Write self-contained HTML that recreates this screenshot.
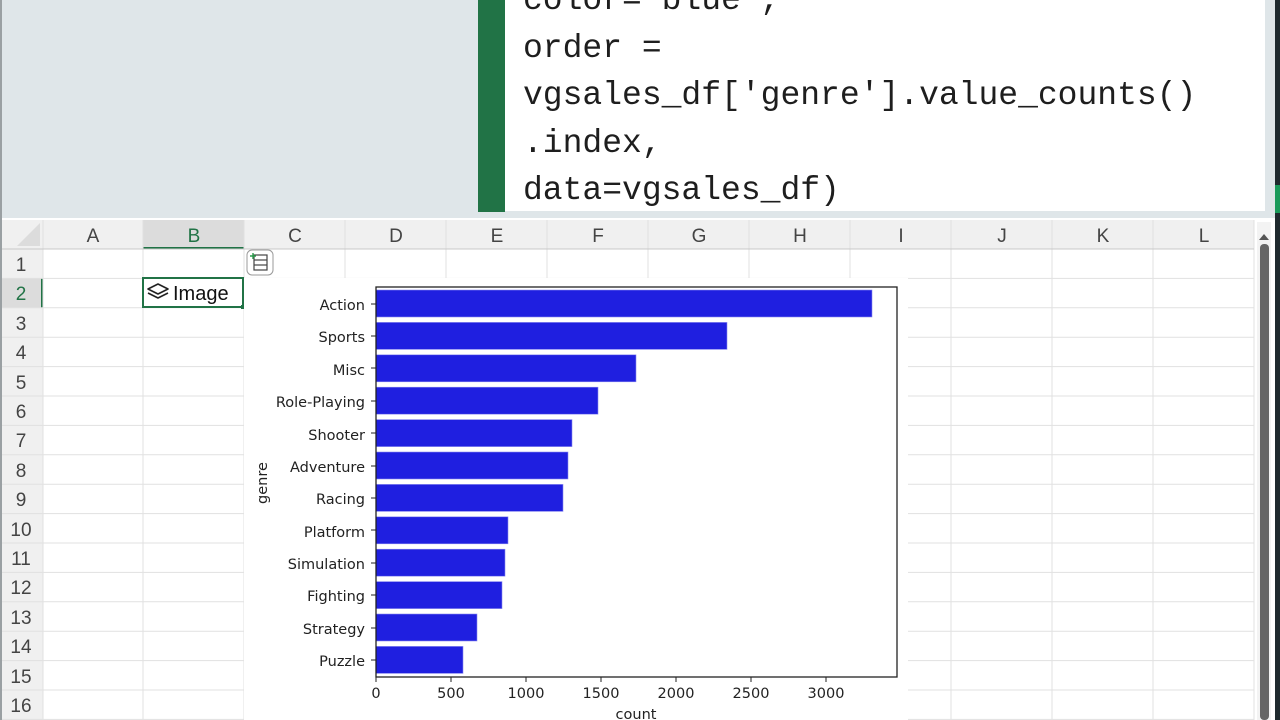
<!DOCTYPE html>
<html><head><meta charset="utf-8"><style>
html,body{margin:0;padding:0;width:1280px;height:720px;overflow:hidden;background:#fff;font-family:"Liberation Sans",sans-serif}
.abs{position:absolute}
.code{font-family:"Liberation Mono",monospace;font-size:33px;color:#1e1e1e;line-height:47.5px;white-space:pre}
</style></head><body>
<div class="abs" style="left:0;top:0;width:1280px;height:220px;background:#dfe6e9"></div>
<div class="abs" style="left:0;top:0;width:2px;height:720px;background:#9aa0a3"></div>
<div class="abs" style="left:478px;top:0;width:27px;height:212px;background:#217346"></div>
<div class="abs" style="left:505px;top:0;width:760px;height:211px;background:#fff"></div>
<div class="abs" style="left:1275px;top:0;width:5px;height:720px;background:#1f2a2e"></div>
<div class="abs" style="left:1275px;top:185px;width:5px;height:28px;background:#1a9a5a"></div>
<div class="abs code" style="left:523px;top:-23px">color='blue',
order =
vgsales_df['genre'].value_counts()
.index,
data=vgsales_df)</div>
<svg class="abs" style="left:0;top:218px" width="1275" height="502" xmlns="http://www.w3.org/2000/svg" font-family="Liberation Sans, sans-serif">
<rect x="2" y="0" width="1273" height="502" fill="#fff"/>
<rect x="2" y="2" width="1252" height="29" fill="#f0f0f0"/>
<rect x="143" y="2" width="101" height="29" fill="#dcdcdc"/>
<line x1="143" y1="30" x2="244" y2="30" stroke="#217346" stroke-width="2"/>
<rect x="2" y="31" width="41" height="471" fill="#f0f0f0"/>
<rect x="2" y="60" width="41" height="30" fill="#dcdcdc"/>
<line x1="42" y1="60" x2="42" y2="90" stroke="#217346" stroke-width="2"/>
<polygon points="40,5 40,28 17,28" fill="#dcdcdc"/>
<g stroke="#e1e1e1" stroke-width="1">
<line x1="43" y1="2" x2="43" y2="502"/><line x1="143" y1="2" x2="143" y2="502"/><line x1="244" y1="2" x2="244" y2="502"/>
<line x1="345" y1="2" x2="345" y2="60"/><line x1="446" y1="2" x2="446" y2="60"/><line x1="547" y1="2" x2="547" y2="60"/><line x1="648" y1="2" x2="648" y2="60"/><line x1="749" y1="2" x2="749" y2="60"/><line x1="850" y1="2" x2="850" y2="60"/>
<line x1="951" y1="2" x2="951" y2="502"/><line x1="1052" y1="2" x2="1052" y2="502"/><line x1="1153" y1="2" x2="1153" y2="502"/><line x1="1254" y1="2" x2="1254" y2="502"/>
<line x1="2" y1="31" x2="1254" y2="31" stroke="#c8c8c8"/>
<line x1="2" y1="60.4" x2="1254" y2="60.4"/><line x1="2" y1="89.8" x2="1254" y2="89.8"/><line x1="2" y1="119.2" x2="1254" y2="119.2"/><line x1="2" y1="148.6" x2="1254" y2="148.6"/><line x1="2" y1="178" x2="1254" y2="178"/><line x1="2" y1="207.4" x2="1254" y2="207.4"/><line x1="2" y1="236.8" x2="1254" y2="236.8"/><line x1="2" y1="266.2" x2="1254" y2="266.2"/><line x1="2" y1="295.6" x2="1254" y2="295.6"/><line x1="2" y1="325" x2="1254" y2="325"/><line x1="2" y1="354.4" x2="1254" y2="354.4"/><line x1="2" y1="383.8" x2="1254" y2="383.8"/><line x1="2" y1="413.2" x2="1254" y2="413.2"/><line x1="2" y1="442.6" x2="1254" y2="442.6"/><line x1="2" y1="472" x2="1254" y2="472"/><line x1="2" y1="501.4" x2="1254" y2="501.4"/>
</g>
<g font-size="19" fill="#444" text-anchor="middle">
<text x="93" y="24">A</text><text x="194" y="24" fill="#217346">B</text><text x="295" y="24">C</text><text x="396" y="24">D</text><text x="497" y="24">E</text><text x="598" y="24">F</text><text x="699" y="24">G</text><text x="800" y="24">H</text><text x="901" y="24">I</text><text x="1002" y="24">J</text><text x="1103" y="24">K</text><text x="1204" y="24">L</text>
</g>
<g font-size="19" fill="#444" text-anchor="middle">
<text x="21" y="53">1</text><text x="21" y="82" fill="#217346">2</text><text x="21" y="112">3</text><text x="21" y="141">4</text><text x="21" y="171">5</text><text x="21" y="200">6</text><text x="21" y="229">7</text><text x="21" y="259">8</text><text x="21" y="288">9</text><text x="21" y="318">10</text><text x="21" y="347">11</text><text x="21" y="376">12</text><text x="21" y="406">13</text><text x="21" y="435">14</text><text x="21" y="465">15</text><text x="21" y="494">16</text>
</g>
<rect x="143" y="60" width="100" height="29" fill="none" stroke="#217346" stroke-width="2"/>
<rect x="241" y="87" width="4" height="4" fill="#217346"/>
<g fill="none" stroke="#222" stroke-width="1.6" stroke-linejoin="round"><path d="M158 66 L168 71 L158 76 L148 71 Z"/><path d="M148 75 L158 80 L168 75"/></g>
<text x="173" y="82" font-size="20" fill="#111">Image</text>
<rect x="1257" y="4" width="14" height="498" fill="#f3f3f3"/>
<polygon points="1259,22 1264,16 1269,22" fill="#555"/>
<rect x="1260" y="26" width="9" height="476" rx="4" fill="#666"/>
<rect x="247" y="32" width="26" height="25" rx="5" fill="#fff" stroke="#999"/>
<g stroke="#444" stroke-width="1.2" fill="none"><rect x="254" y="37" width="13" height="15"/><line x1="254" y1="42" x2="267" y2="42"/><line x1="254" y1="47" x2="267" y2="47"/></g>
<path d="M250 38 h6 M253 35 v6" stroke="#2a9a4a" stroke-width="1.4"/>
</svg>
<svg class="abs" style="left:244px;top:278px" width="664" height="442" xmlns="http://www.w3.org/2000/svg" font-family="DejaVu Sans, sans-serif">
<rect width="664" height="442" fill="#fff"/>
<g fill="#1f1fe0" stroke="#8a8af0" stroke-width="0.6">
<rect x="132" y="12" width="496" height="27"/>
<rect x="132" y="44.4" width="351" height="27"/>
<rect x="132" y="76.8" width="260" height="27"/>
<rect x="132" y="109.2" width="222" height="27"/>
<rect x="132" y="141.6" width="196" height="27"/>
<rect x="132" y="174" width="192" height="27"/>
<rect x="132" y="206.4" width="187" height="27"/>
<rect x="132" y="238.8" width="132" height="27"/>
<rect x="132" y="271.2" width="129" height="27"/>
<rect x="132" y="303.6" width="126" height="27"/>
<rect x="132" y="336" width="101" height="27"/>
<rect x="132" y="368.4" width="87" height="27"/>
</g>
<rect x="132" y="9" width="521" height="390" fill="none" stroke="#222" stroke-width="1.3"/>
<g font-size="14.5" fill="#222" text-anchor="end">
<text x="121" y="32">Action</text><text x="121" y="64">Sports</text><text x="121" y="97">Misc</text><text x="121" y="129">Role-Playing</text><text x="121" y="162">Shooter</text><text x="121" y="194">Adventure</text><text x="121" y="226">Racing</text><text x="121" y="259">Platform</text><text x="121" y="291">Simulation</text><text x="121" y="323">Fighting</text><text x="121" y="356">Strategy</text><text x="121" y="388">Puzzle</text>
</g>
<g stroke="#222" stroke-width="1"><path d="M127 26H132M127 58H132M127 90H132M127 123H132M127 155H132M127 188H132M127 220H132M127 252H132M127 285H132M127 317H132M127 350H132M127 382H132"/>
<path d="M132 399V404M207 399V404M282 399V404M357 399V404M432 399V404M507 399V404M582 399V404"/></g>
<g font-size="14.5" fill="#222" text-anchor="middle">
<text x="132" y="420">0</text><text x="207" y="420">500</text><text x="282" y="420">1000</text><text x="357" y="420">1500</text><text x="432" y="420">2000</text><text x="507" y="420">2500</text><text x="582" y="420">3000</text>
<text x="392" y="441">count</text>
<text transform="translate(23,205) rotate(-90)">genre</text>
</g>
</svg>
</body></html>
